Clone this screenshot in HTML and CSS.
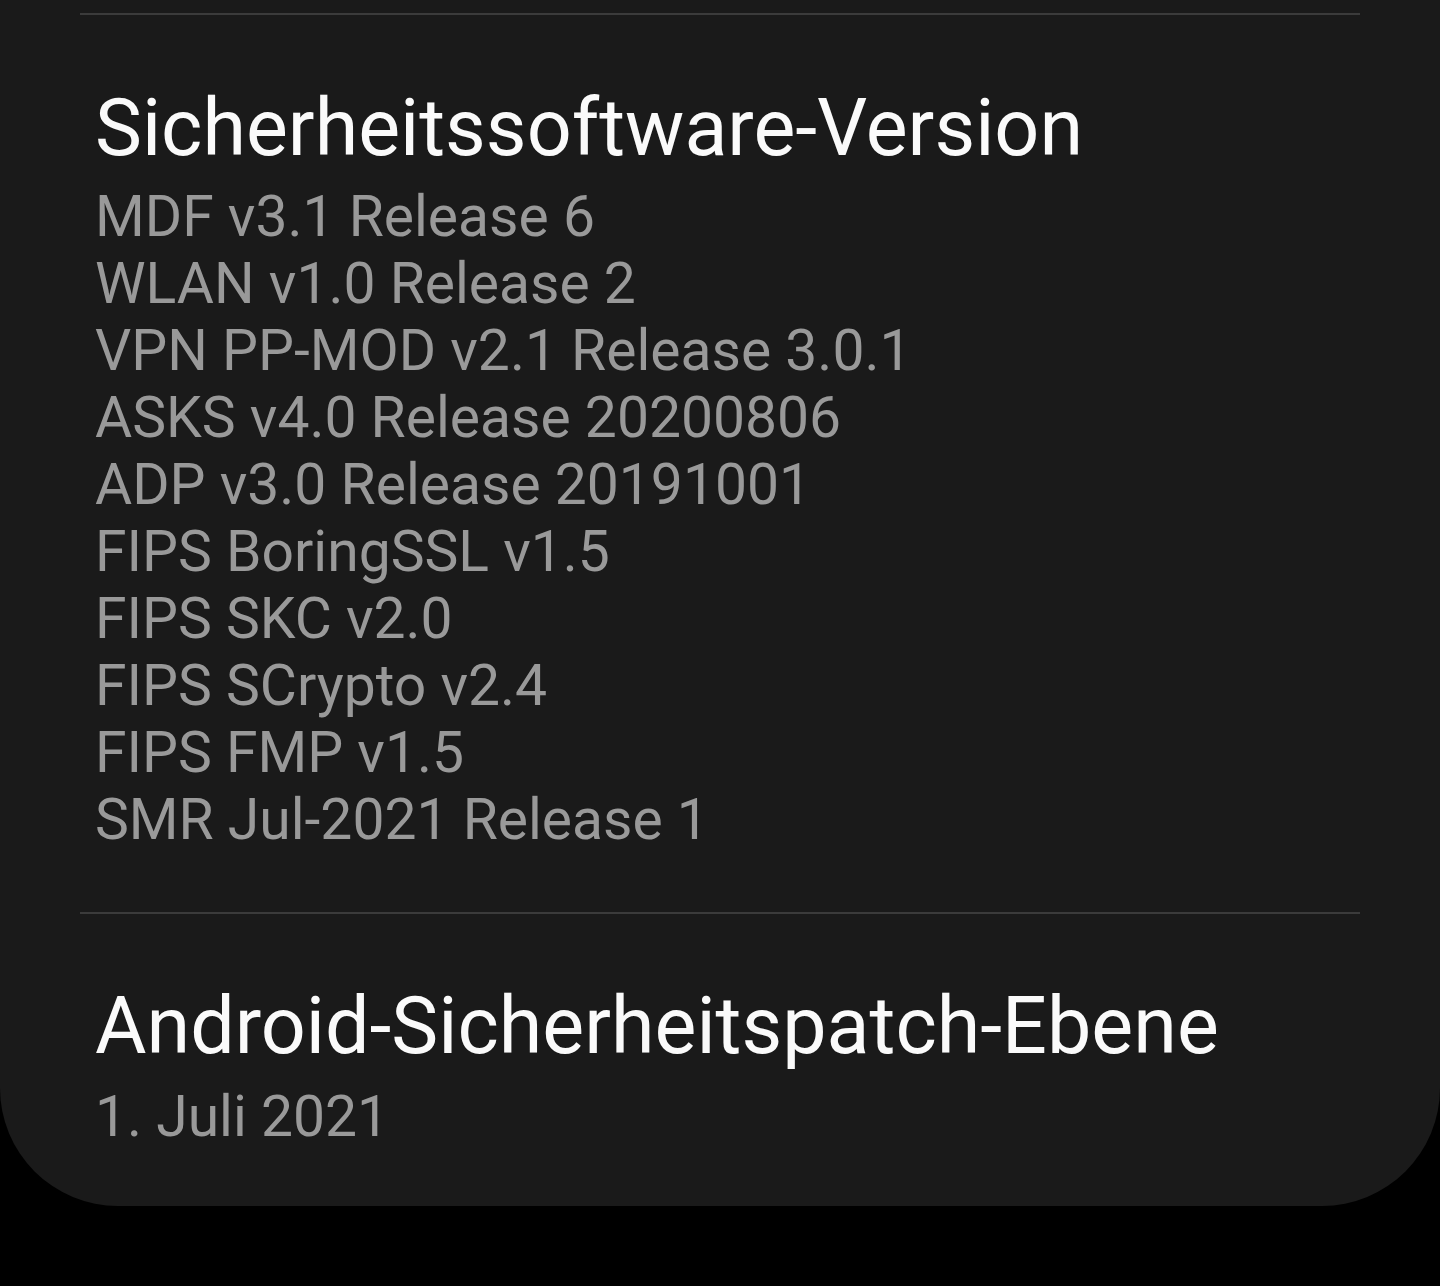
FILE: index.html
```html
<!DOCTYPE html>
<html lang="de">
<head>
    <meta charset="UTF-8">
    <meta name="viewport" content="width=device-width, initial-scale=1.0">
    <title>Softwareinformationen</title>
    <link rel="stylesheet" href="styles.css">
</head>
<body>
    <div class="card">
        <hr class="divider">
        <div class="item">
            <h2 class="item-title">Sicherheitssoftware-Version</h2>
            <div class="item-summary">
                <div>MDF v3.1 Release 6</div>
                <div>WLAN v1.0 Release 2</div>
                <div>VPN PP-MOD v2.1 Release 3.0.1</div>
                <div>ASKS v4.0 Release 20200806</div>
                <div>ADP v3.0 Release 20191001</div>
                <div>FIPS BoringSSL v1.5</div>
                <div>FIPS SKC v2.0</div>
                <div>FIPS SCrypto v2.4</div>
                <div>FIPS FMP v1.5</div>
                <div>SMR Jul-2021 Release 1</div>
            </div>
        </div>
        <hr class="divider">
        <div class="item item-last">
            <h2 class="item-title">Android-Sicherheitspatch-Ebene</h2>
            <div class="item-summary">
                <div>1. Juli 2021</div>
            </div>
        </div>
    </div>
</body>
</html>
```

FILE: styles.css
```css
body {
    margin: 0;
    background-color: #000;
    font-family: Roboto, "Liberation Sans", sans-serif;
}
.card {
    background-color: #1a1a1a;
    padding-top: 13px;
    border-radius: 0 0 118px 118px;
}
.divider {
    margin: 0 80px;
    border: none;
    height: 2px;
    background-color: #3b3b3b;
}
.item {
    padding: 65px 95px 59px;
}
.item-last {
    padding-top: 64px;
    padding-bottom: 56px;
}
.item-title {
    margin: 0 0 7px;
    font-size: 79px;
    line-height: 96px;
    font-weight: 400;
    color: #fafafa;
}
.item-last .item-title {
    margin-bottom: 9px;
}
.item-summary {
    font-size: 57px;
    line-height: 67px;
    color: #999;
}
```
